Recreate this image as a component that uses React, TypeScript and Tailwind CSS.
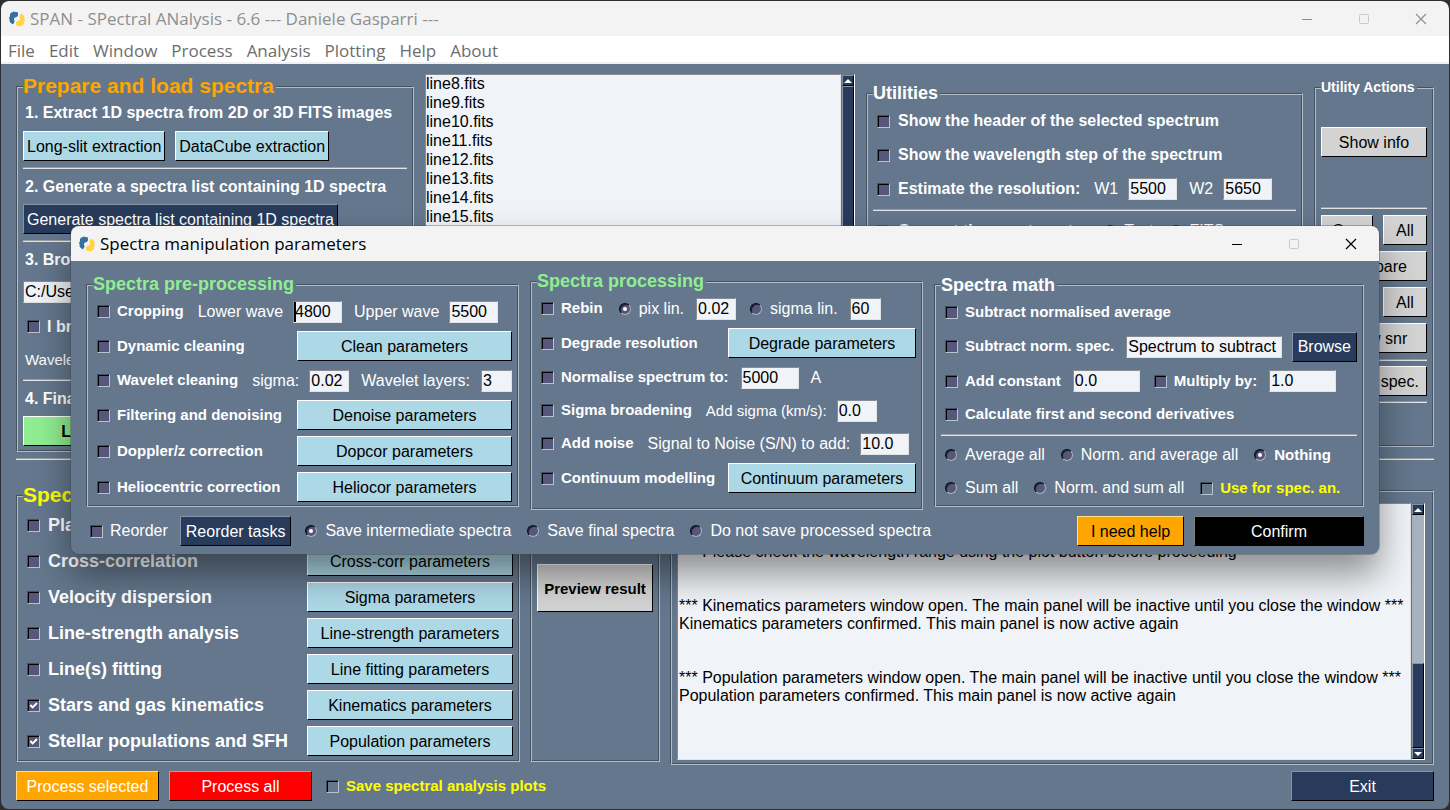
import React from "react";

const cx = (...parts: (string | false | undefined)[]) => parts.filter(Boolean).join(" ");

function AppIcon() {
  const snake =
    "M3.4 1.2C4.4.2 5.8.5 6.5 1.3C8 .7 9.4 1.7 9 3.3C9.2 4.8 8.2 5.8 6.9 6.2C5.1 6.7 4.6 7.8 5.2 9.2C5.9 10.5 5.4 11.6 4.6 12.5C4.2 13.6 2.7 13.4 2.4 12.2C.9 11.6.2 10.2.7 8.8C-.2 7.4.1 5.8 1.1 5C.4 3.4 1.6 1.4 3.4 1.2Z";
  return (
    <svg viewBox="0 0 16 16" className="size-4 shrink-0" aria-hidden="true">
      <path d={snake} fill="#3470a0" />
      <path d={snake} fill="#ffd545" transform="rotate(180 8 8)" />
    </svg>
  );
}

function TitleBar({ title, active }: { title: string; active?: boolean }) {
  return (
    <header
      className={cx(
        "flex h-[35px] items-center rounded-t-lg bg-[#f3f3f3] pl-2",
        active ? "text-black" : "text-[#8f8f8f]",
      )}
    >
      <AppIcon />
      <h1 className="ml-[5px] flex-1 whitespace-nowrap font-['Open_Sans',sans-serif] text-[17px] leading-6">{title}</h1>
      <button type="button" aria-label="Minimize" className="grid h-full w-[57px] place-items-center">
        <svg width="12" height="12" viewBox="0 0 12 12" fill="none" stroke="currentColor">
          <path d="M1 6.5H11" />
        </svg>
      </button>
      <button type="button" aria-label="Maximize" disabled className="grid h-full w-[57px] place-items-center text-[#c9c9c9]">
        <svg width="12" height="12" viewBox="0 0 12 12" fill="none" stroke="currentColor">
          <rect x="1.5" y="1.5" width="9" height="9" rx="1" />
        </svg>
      </button>
      <button type="button" aria-label="Close" className="grid h-full w-[57px] place-items-center">
        <svg width="12" height="12" viewBox="0 0 12 12" fill="none" stroke="currentColor" strokeWidth="1.2">
          <path d="M1 1L11 11M11 1L1 11" />
        </svg>
      </button>
    </header>
  );
}

function Frame({
  title,
  legendClass,
  className,
  children,
}: {
  title?: string;
  legendClass?: string;
  className?: string;
  children: React.ReactNode;
}) {
  return (
    <fieldset
      className={cx(
        "min-w-0 border border-t-[#45525f] border-r-[#b2bdc8] border-b-[#b2bdc8] border-l-[#45525f] px-[6px] shadow-[inset_1px_1px_0_#b2bdc8,inset_-1px_-1px_0_#45525f]",
        className,
      )}
    >
      {title && (
        <legend
          className={cx(
            "whitespace-nowrap bg-[#64778d] pr-0.5 font-bold",
            legendClass ?? "text-[18px] leading-[22px]",
          )}
        >
          {title}
        </legend>
      )}
      {children}
    </fieldset>
  );
}

const tones = {
  sky: "bg-[#add8e6] text-black border-t-white border-l-white",
  navy: "bg-[#283b5b] text-white border-t-[#8592a8] border-l-[#8592a8]",
  gray: "bg-[#d3d3d3] text-black border-t-white border-l-white",
  green: "bg-[#90ee90] text-black border-t-white border-l-white",
  orange: "bg-[#ffa500] text-white border-t-[#ffe08a] border-l-[#ffe08a]",
  amber: "bg-[#ffa500] text-black border-t-[#ffe08a] border-l-[#ffe08a]",
  red: "bg-[#ff0000] text-white border-t-[#ff8080] border-l-[#ff8080]",
  black: "bg-black text-white border-t-[#808080] border-l-[#808080]",
};

function Btn({
  tone,
  height = "h-[30px]",
  className,
  children,
}: {
  tone: keyof typeof tones;
  height?: string;
  className?: string;
  children: React.ReactNode;
}) {
  return (
    <button
      type="button"
      className={cx("shrink-0 whitespace-nowrap border border-r-black border-b-black", height, tones[tone], className)}
    >
      {children}
    </button>
  );
}

function Mark({
  type,
  name,
  checked,
  plain,
}: {
  type: "checkbox" | "radio";
  name?: string;
  checked?: boolean;
  plain?: boolean;
}) {
  if (type === "radio") {
    return (
      <span className="grid size-3 shrink-0 place-items-center">
        <input
          type="radio"
          name={name}
          defaultChecked={checked}
          className="peer col-start-1 row-start-1 size-3 appearance-none rounded-full border border-t-[#0c0f14] border-r-[#a9b5c1] border-b-[#a9b5c1] border-l-[#0c0f14] bg-[#57577b] shadow-[inset_1px_1px_0_#1b1f2a]"
        />
        <span className="pointer-events-none col-start-1 row-start-1 hidden size-1 rounded-full bg-white peer-checked:block" />
      </span>
    );
  }
  return (
    <span className="grid size-[13px] shrink-0 place-items-center">
      <input
        type="checkbox"
        defaultChecked={checked}
        className={cx(
          "peer col-start-1 row-start-1 size-[13px] appearance-none border border-t-[#434f5e] border-r-[#b9c3cd] border-b-[#b9c3cd] border-l-[#434f5e] shadow-[inset_1px_1px_0_#000]",
          plain ? "bg-[#64778d]" : "bg-[#57577b]",
        )}
      />
      <svg
        viewBox="0 0 13 13"
        className="pointer-events-none col-start-1 row-start-1 hidden size-[13px] peer-checked:block"
        fill="none"
        stroke="#fff"
        strokeWidth="2"
      >
        <path d="M3.3 6L5.6 8.4L10 4" />
      </svg>
    </span>
  );
}

function Option({
  type = "checkbox",
  name,
  checked,
  plain,
  wide,
  labelClass = "text-[15px] pb-0.5 font-bold",
  children,
}: {
  type?: "checkbox" | "radio";
  name?: string;
  checked?: boolean;
  plain?: boolean;
  wide?: boolean;
  labelClass?: string;
  children: React.ReactNode;
}) {
  return (
    <label className={cx("flex shrink-0 items-center whitespace-nowrap pl-1 pr-0.5", wide ? "gap-2" : "gap-[7px]")}>
      <Mark type={type} name={name} checked={checked} plain={plain} />
      <span className={labelClass}>{children}</span>
    </label>
  );
}

function Radio({
  name,
  checked,
  labelClass = "text-base",
  children,
}: {
  name: string;
  checked?: boolean;
  labelClass?: string;
  children: React.ReactNode;
}) {
  return (
    <Option type="radio" name={name} checked={checked} wide labelClass={labelClass}>
      {children}
    </Option>
  );
}

function Field({
  label,
  value,
  width,
  caret,
}: {
  label: string;
  value: string;
  width: string;
  caret?: boolean;
}) {
  return (
    <input
      type="text"
      aria-label={label}
      defaultValue={value}
      className={cx(
        "h-[22px] min-w-0 rounded-none border border-t-[#858c95] border-r-[#e3e3e3] border-b-[#e3e3e3] border-l-[#858c95] bg-[#f0f3f7] px-px text-base text-black outline-none",
        width,
        caret && "shadow-[inset_2px_0_0_#000]",
      )}
    />
  );
}

function Text({ className = "text-base", children }: { className?: string; children: React.ReactNode }) {
  return <span className={cx("shrink-0 whitespace-nowrap pl-0.5", className)}>{children}</span>;
}

function Row({ h = "h-[33px]", children }: { h?: string; children: React.ReactNode }) {
  return <div className={cx("flex items-center gap-2.5", h)}>{children}</div>;
}

function Rule() {
  return (
    <div className="flex h-2 items-center">
      <hr className="h-0.5 w-full border-t border-b border-t-[#9c9c9c] border-b-[#e3e3e3]" />
    </div>
  );
}

function Arrow({ down }: { down?: boolean }) {
  return (
    <button
      type="button"
      aria-label={down ? "Scroll down" : "Scroll up"}
      className="grid h-[11px] w-full shrink-0 place-items-center border border-t-[#8592a8] border-r-black border-b-black border-l-[#8592a8] bg-[#283b5b]"
    >
      <svg width="8" height="4" viewBox="0 0 8 4" fill="#fff">
        <path d={down ? "M0 0H8L4 4Z" : "M0 4H8L4 0Z"} />
      </svg>
    </button>
  );
}

function ScrollBar({ thumb }: { thumb: string }) {
  return (
    <div className="flex w-[14px] shrink-0 flex-col border border-t-[#6b7076] border-r-white border-b-white border-l-[#6b7076] bg-[#a6b2be]">
      <Arrow />
      <div className="flex flex-1 flex-col justify-end">
        <div
          className={cx(
            "border border-t-[#8592a8] border-r-black border-b-black border-l-[#8592a8] bg-[#283b5b]",
            thumb,
          )}
        />
      </div>
      <Arrow down />
    </div>
  );
}

const menus = ["File", "Edit", "Window", "Process", "Analysis", "Plotting", "Help", "About"];
const files = [8, 9, 10, 11, 12, 13, 14, 15];

const analyses: [string, string, boolean][] = [
  ["Planck", "Blackbody", false],
  ["Cross-correlation", "Cross-corr parameters", false],
  ["Velocity dispersion", "Sigma parameters", false],
  ["Line-strength analysis", "Line-strength parameters", false],
  ["Line(s) fitting", "Line fitting parameters", false],
  ["Stars and gas kinematics", "Kinematics parameters", true],
  ["Stellar populations and SFH", "Population parameters", true],
];

const log = `

*** Please check the wavelength range using the plot button before proceeding


*** Kinematics parameters window open. The main panel will be inactive until you close the window ***
Kinematics parameters confirmed. This main panel is now active again


*** Population parameters window open. The main panel will be inactive until you close the window ***
Population parameters confirmed. This main panel is now active again`;

function PreparePanel() {
  const heading = "text-base font-bold";
  return (
    <Frame title="Prepare and load spectra" legendClass="text-[21px] leading-6 text-[#ffa500]" className="h-[378px]">
      <Row h="h-[30px]">
        <Text className={heading}>1. Extract 1D spectra from 2D or 3D FITS images</Text>
      </Row>
      <Row h="h-9">
        <Btn tone="sky" className="px-[3px]">Long-slit extraction</Btn>
        <Btn tone="sky" className="px-[3px]">DataCube extraction</Btn>
      </Row>
      <Rule />
      <Row h="h-[29px]">
        <Text className={heading}>2. Generate a spectra list containing 1D spectra</Text>
      </Row>
      <Row h="h-9">
        <Btn tone="navy" className="px-[3px]">Generate spectra list containing 1D spectra</Btn>
      </Row>
      <Rule />
      <Row h="h-[29px]">
        <Text className={heading}>3. Browse</Text>
      </Row>
      <Row h="h-9">
        <Field label="Spectra list" value="C:/Users" width="flex-1" />
      </Row>
      <Row>
        <Option labelClass={heading}>I browsed</Option>
      </Row>
      <Row>
        <Text className="text-[15px]">Wavelength</Text>
      </Row>
      <Rule />
      <Row h="h-[29px]">
        <Text className={heading}>4. Finally</Text>
      </Row>
      <Row h="h-9">
        <Btn tone="green" className="w-[120px] font-bold">Load!</Btn>
      </Row>
    </Frame>
  );
}

function UtilitiesPanel() {
  const bold = "text-base font-bold";
  return (
    <Frame title="Utilities" className="h-[362px]">
      <Row h="h-[34px]">
        <Option wide labelClass={bold}>Show the header of the selected spectrum</Option>
      </Row>
      <Row h="h-[34px]">
        <Option wide labelClass={bold}>Show the wavelength step of the spectrum</Option>
      </Row>
      <Row h="h-[34px]">
        <Option wide labelClass={bold}>Estimate the resolution:</Option>
        <Text>W1</Text>
        <Field label="W1" value="5500" width="w-[49px]" />
        <Text>W2</Text>
        <Field label="W2" value="5650" width="w-[49px]" />
      </Row>
      <Rule />
      <Row h="h-[34px]">
        <Option wide labelClass={bold}>Convert the spectrum to:</Option>
        <Radio name="convert">Text</Radio>
        <Radio name="convert" checked>FITS</Radio>
      </Row>
    </Frame>
  );
}

function UtilityActions() {
  return (
    <Frame title="Utility Actions" legendClass="text-sm leading-4" className="h-[368px]">
      <div className="flex flex-col pt-[29px]">
        <Row h="h-9">
          <Btn tone="gray" className="flex-1">Show info</Btn>
        </Row>
        <div className="h-11" />
        <Rule />
        <Row h="h-9">
          <Btn tone="gray" className="flex-1">One</Btn>
          <Btn tone="gray" className="w-11">All</Btn>
        </Row>
        <Row h="h-9">
          <Btn tone="gray" className="flex-1">Compare</Btn>
        </Row>
        <Row h="h-9">
          <Btn tone="gray" className="flex-1">One</Btn>
          <Btn tone="gray" className="w-11">All</Btn>
        </Row>
        <Row h="h-9">
          <Btn tone="gray" className="flex-1">Show snr</Btn>
        </Row>
        <Rule />
        <Row h="h-[34px]">
          <Btn tone="gray" className="flex-1">Modify spec.</Btn>
        </Row>
        <Rule />
      </div>
    </Frame>
  );
}

function PreProcessing() {
  const wide = "ml-auto w-[215px]";
  return (
    <Frame title="Spectra pre-processing" legendClass="text-[18px] leading-[22px] text-[#90ee90]" className="pb-px">
      <Row>
        <Option>Cropping</Option>
        <Text>Lower wave</Text>
        <Field label="Lower wave" value="4800" width="w-[49px]" caret />
        <Text>Upper wave</Text>
        <Field label="Upper wave" value="5500" width="w-[49px]" />
      </Row>
      <Row h="h-9">
        <Option>Dynamic cleaning</Option>
        <Btn tone="sky" className={wide}>Clean parameters</Btn>
      </Row>
      <Row>
        <Option>Wavelet cleaning</Option>
        <Text>sigma:</Text>
        <Field label="sigma" value="0.02" width="w-10" />
        <Text>Wavelet layers:</Text>
        <Field label="Wavelet layers" value="3" width="ml-auto w-[31px]" />
      </Row>
      <Row h="h-9">
        <Option>Filtering and denoising</Option>
        <Btn tone="sky" className={wide}>Denoise parameters</Btn>
      </Row>
      <Row h="h-9">
        <Option>Doppler/z correction</Option>
        <Btn tone="sky" className={wide}>Dopcor parameters</Btn>
      </Row>
      <Row h="h-9">
        <Option>Heliocentric correction</Option>
        <Btn tone="sky" className={wide}>Heliocor parameters</Btn>
      </Row>
    </Frame>
  );
}

function Processing() {
  const wide = "ml-auto w-[188px]";
  return (
    <Frame title="Spectra processing" legendClass="text-[18px] leading-[22px] text-[#90ee90]" className="pb-[13px]">
      <Row>
        <Option>Rebin</Option>
        <Radio name="rebin" checked>pix lin.</Radio>
        <Field label="Pixel step" value="0.02" width="w-10" />
        <Radio name="rebin">sigma lin.</Radio>
        <Field label="Sigma step" value="60" width="w-[31px]" />
      </Row>
      <Row h="h-9">
        <Option>Degrade resolution</Option>
        <Btn tone="sky" className={wide}>Degrade parameters</Btn>
      </Row>
      <Row>
        <Option>Normalise spectrum to:</Option>
        <Field label="Normalise wavelength" value="5000" width="w-[58px]" />
        <Text>A</Text>
      </Row>
      <Row>
        <Option>Sigma broadening</Option>
        <Text className="text-[15px]">Add sigma (km/s):</Text>
        <Field label="Add sigma" value="0.0" width="w-10" />
      </Row>
      <Row>
        <Option>Add noise</Option>
        <Text>Signal to Noise (S/N) to add:</Text>
        <Field label="Signal to Noise" value="10.0" width="w-[49px]" />
      </Row>
      <Row h="h-9">
        <Option>Continuum modelling</Option>
        <Btn tone="sky" className={wide}>Continuum parameters</Btn>
      </Row>
    </Frame>
  );
}

function SpectraMath() {
  return (
    <Frame title="Spectra math" className="pb-px">
      <Row>
        <Option>Subtract normalised average</Option>
      </Row>
      <Row h="h-9">
        <Option>Subtract norm. spec.</Option>
        <Field label="Spectrum to subtract" value="Spectrum to subtract" width="flex-1" />
        <Btn tone="navy" className="px-[5px]">Browse</Btn>
      </Row>
      <Row>
        <Option>Add constant</Option>
        <Field label="Constant" value="0.0" width="w-[67px]" />
        <Option>Multiply by:</Option>
        <Field label="Factor" value="1.0" width="w-[67px]" />
      </Row>
      <Row>
        <Option>Calculate first and second derivatives</Option>
      </Row>
      <Rule />
      <Row>
        <Radio name="combine">Average all</Radio>
        <Radio name="combine">Norm. and average all</Radio>
        <Radio name="combine" checked labelClass="text-[15px] pb-0.5 font-bold">Nothing</Radio>
      </Row>
      <Row>
        <Radio name="combine">Sum all</Radio>
        <Radio name="combine">Norm. and sum all</Radio>
        <Option plain labelClass="text-[15px] pb-0.5 font-bold text-[#ffff00]">Use for spec. an.</Option>
      </Row>
    </Frame>
  );
}

function ManipulationDialog() {
  return (
    <section
      role="dialog"
      aria-label="Spectra manipulation parameters"
      className="absolute inset-x-[71px] top-[226px] rounded-lg bg-[#64778d] shadow-[0_0_0_1px_rgba(60,70,80,0.35),0_20px_36px_rgba(0,0,0,0.42)]"
    >
      <TitleBar title="Spectra manipulation parameters" active />
      <div className="px-[15px] pt-[9px] pb-[5px]">
        <div className="grid grid-cols-[433fr_393fr_430fr] items-center gap-[11px]">
          <PreProcessing />
          <Processing />
          <SpectraMath />
        </div>
        <div className="mt-[3px] flex h-9 items-center gap-2.5">
          <Option labelClass="text-base">Reorder</Option>
          <Btn tone="navy" className="px-[5px]">Reorder tasks</Btn>
          <Radio name="save" checked>Save intermediate spectra</Radio>
          <Radio name="save">Save final spectra</Radio>
          <Radio name="save">Do not save processed spectra</Radio>
          <Btn tone="amber" className="ml-auto w-[107px]">I need help</Btn>
          <Btn tone="black" className="w-[170px]">Confirm</Btn>
        </div>
      </div>
    </section>
  );
}

export default function App() {
  return (
    <div className="relative min-h-screen bg-[#2e2e30] p-px font-['Liberation_Sans',Arial,sans-serif] text-base leading-[19px] text-white">
      <main className="flex min-h-[calc(100vh-2px)] flex-col overflow-hidden rounded-lg bg-[#64778d]">
        <TitleBar title="SPAN - SPectral ANalysis - 6.6 --- Daniele Gasparri ---" />
        <nav className="flex h-7 gap-[14px] border-b-2 border-[#f0f0f0] bg-white pt-px pl-[7px] font-['Open_Sans',sans-serif] text-[17px] leading-7 text-[#6d6d6d]">
          {menus.map((m) => (
            <button key={m} type="button">
              {m}
            </button>
          ))}
        </nav>
        <div className="flex-1 px-[15px] pt-[10px]">
          <div className="grid grid-cols-[398fr_430fr_437fr_120fr] items-center gap-[11px]">
            <PreparePanel />
            <div className="flex h-[170px] self-start">
              <select
                multiple
                size={8}
                aria-label="Spectra list"
                className="h-[154px] min-w-0 flex-1 appearance-none overflow-hidden rounded-none border border-t-[#858c95] border-r-[#e3e3e3] border-b-[#e3e3e3] border-l-[#858c95] bg-[#f0f3f7] p-0 text-base text-black outline-none"
              >
                {files.map((n) => (
                  <option key={n} className="h-[19px] min-h-0 p-0 leading-[19px]">
                    {`line${n}.fits`}
                  </option>
                ))}
              </select>
              <ScrollBar thumb="flex-1" />
            </div>
            <UtilitiesPanel />
            <UtilityActions />
          </div>
          <div className="pt-[3px]">
            <Rule />
          </div>
          <div className="mt-5 grid grid-cols-[504fr_130fr_764fr] items-end gap-[10px]">
            <Frame
              title="Spectral analysis"
              legendClass="text-[21px] leading-6 text-[#ffff00]"
              className="mb-[3px] pb-0.5"
            >
              {analyses.map(([name, button, on]) => (
                <Row key={name} h="h-9">
                  <Option wide checked={on} labelClass="text-[18px] font-bold">
                    {name}
                  </Option>
                  <Btn tone="sky" className="ml-auto w-[206px]">
                    {button}
                  </Btn>
                </Row>
              ))}
            </Frame>
            <Frame className="mb-[3px] h-[268px] pt-[69px]">
              <Btn tone="gray" height="h-12" className="w-full text-[15px] font-bold">
                Preview result
              </Btn>
            </Frame>
            <Frame className="h-[275px] pt-3 pb-1">
              <div className="flex h-full pr-[2px]">
                <textarea
                  readOnly
                  aria-label="Output"
                  defaultValue={log}
                  className="block min-w-0 flex-1 resize-none overflow-hidden rounded-none border border-t-[#858c95] border-r-[#e3e3e3] border-b-[#e3e3e3] border-l-[#858c95] bg-[#f0f3f7] px-px pt-[3px] text-base leading-[18px] text-black outline-none"
                />
                <ScrollBar thumb="h-[85px]" />
              </div>
            </Frame>
          </div>
          <div className="mt-[3px] flex h-9 items-center gap-2.5">
            <Btn tone="orange" className="w-[143px]">Process selected</Btn>
            <Btn tone="red" className="w-[143px]">Process all</Btn>
            <Option plain labelClass="text-[15px] pb-0.5 font-bold text-[#ffff00]">Save spectral analysis plots</Option>
            <Btn tone="navy" className="ml-auto w-[143px]">Exit</Btn>
          </div>
        </div>
      </main>
      <ManipulationDialog />
    </div>
  );
}
